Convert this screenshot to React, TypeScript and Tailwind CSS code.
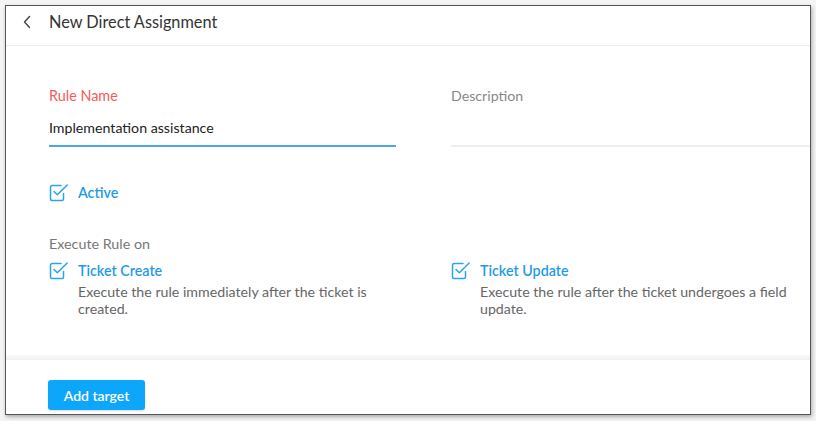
import React from "react";

function CheckIcon() {
  return (
    <svg width="20" height="18" viewBox="0 0 20 18" fill="none" className="shrink-0">
      <path
        d="M12 1.5 H3 a1.5 1.5 0 0 0 -1.5 1.5 V15 a1.5 1.5 0 0 0 1.5 1.5 H13 a1.5 1.5 0 0 0 1.5 -1.5 V9.5"
        stroke="#2aa3ef"
        strokeWidth="1.5"
        strokeLinecap="round"
        strokeLinejoin="round"
      />
      <path d="M5 7.5 L8.3 10.8 L18.2 1" stroke="#2aa3ef" strokeWidth="1.5" strokeLinecap="round" strokeLinejoin="round" />
    </svg>
  );
}

export default function App() {
  return (
    <div
      className="w-[816px] h-[421px] bg-[#f4f4f4] pt-[5px] pl-[5px]"
      style={{ fontFamily: "Lato, 'Open Sans', sans-serif" }}
    >
      <div className="w-[806px] h-[410px] bg-white border border-[#555] shadow-[1px_2px_4px_rgba(0,0,0,0.3)] flex flex-col overflow-hidden">
        <div className="h-[40px] shrink-0 flex items-center pb-[7px] border-b border-[#ececec]">
          <div className="w-[43px] flex justify-center pl-[1px] pr-[3px]">
            <svg width="10" height="14" viewBox="0 0 10 14" fill="none">
              <path d="M7.5 1.5 L2.5 7 L7.5 12.5" stroke="#444" strokeWidth="1.4" strokeLinecap="round" strokeLinejoin="round" />
            </svg>
          </div>
          <div className="text-[16.3px] text-[#333] leading-none">New Direct Assignment</div>
        </div>

        <div className="flex-1 pl-[43px]">
          <div className="flex mt-[40px]">
            <div className="w-[347px]">
              <div className="text-[14.4px] leading-[20px] text-[#f45c5c]">Rule Name</div>
              <div className="mt-[12px] pb-[7px] border-b-2 border-[#4ea6ea] text-[14.2px] leading-[20px] text-[#222]">
                Implementation assistance
              </div>
            </div>
            <div className="ml-[55px] flex-1">
              <div className="text-[14.2px] leading-[20px] text-[#888]">Description</div>
              <div className="mt-[12px] h-[29px] border-b-2 border-[#eeeeee]"></div>
            </div>
          </div>

          <div className="flex items-center gap-[9px] mt-[36px] h-[20px]">
            <CheckIcon />
            <span className="text-[14.3px] leading-[20px] text-[#1e9be8] font-semibold">Active</span>
          </div>

          <div className="mt-[31px] text-[14.3px] leading-[20px] text-[#777]">Execute Rule on</div>

          <div className="flex mt-[7px]">
            <div className="w-[402px] flex gap-[9px]">
              <div className="pt-[1px]">
                <CheckIcon />
              </div>
              <div>
                <div className="text-[14.3px] leading-[20px] text-[#1e9be8] font-semibold">Ticket Create</div>
                <div className="mt-[3px] text-[14.2px] leading-[16.5px] text-[#666] w-[320px]">
                  Execute the rule immediately after the ticket is created.
                </div>
              </div>
            </div>
            <div className="flex-1 flex gap-[9px]">
              <div className="pt-[1px]">
                <CheckIcon />
              </div>
              <div>
                <div className="text-[14.3px] leading-[20px] text-[#1e9be8] font-semibold">Ticket Update</div>
                <div className="mt-[3px] text-[14.2px] leading-[16.5px] text-[#666] w-[320px]">
                  Execute the rule after the ticket undergoes a field update.
                </div>
              </div>
            </div>
          </div>
        </div>

        <div className="h-[5px] shrink-0 bg-gradient-to-b from-[#f9f9f9] to-[#f1f1f1]"></div>
        <div className="h-[54px] shrink-0 pl-[42px] pt-[20px]">
          <button className="h-[30px] w-[97px] rounded-[3px] bg-[#0ca6fb] text-white text-[14px] font-semibold shadow-[0_1px_2px_rgba(0,0,0,0.15)]">
            Add target
          </button>
        </div>
      </div>
    </div>
  );
}
